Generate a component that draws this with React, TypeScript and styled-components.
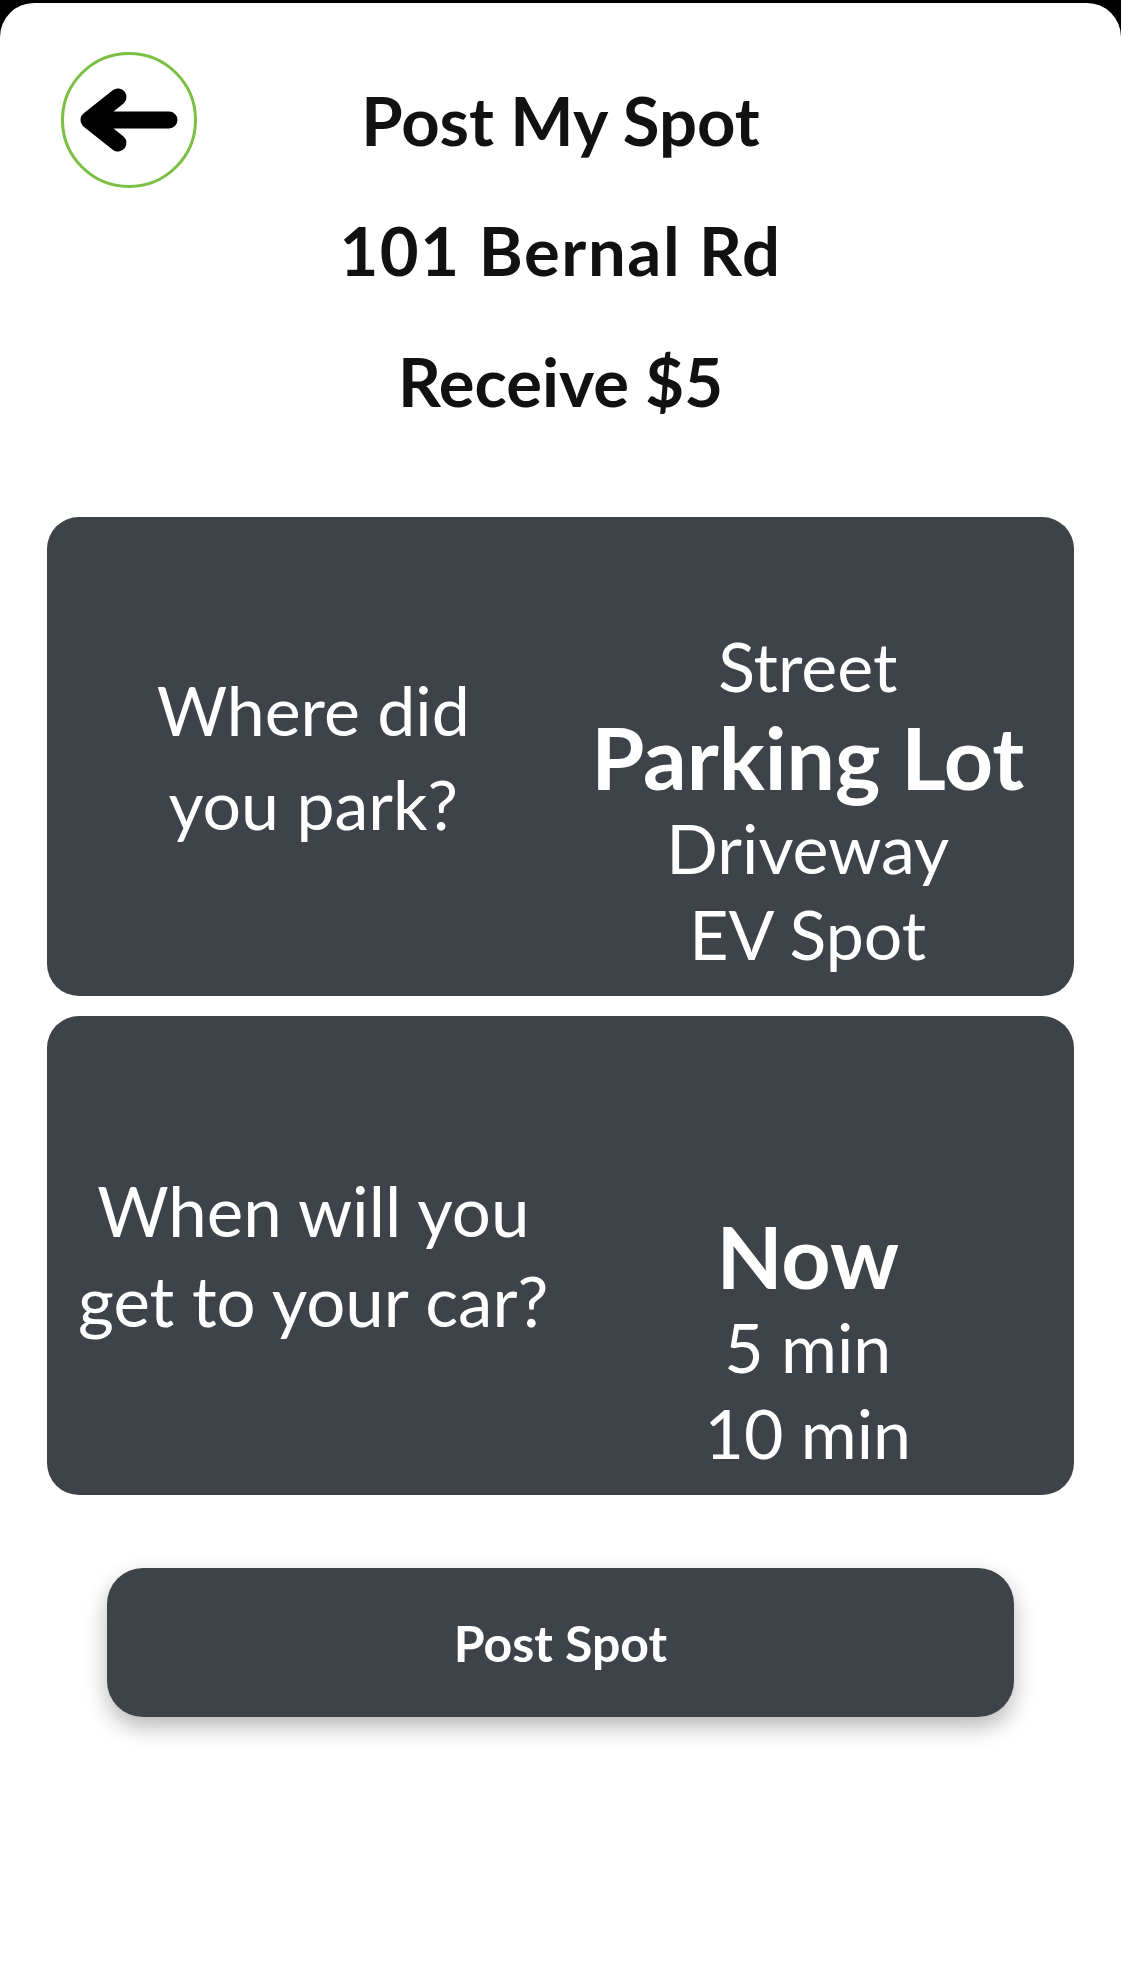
import React from "react";
import styled, { createGlobalStyle } from "styled-components";

const GlobalStyle = createGlobalStyle`
  html, body {
    margin: 0;
    padding: 0;
    background: #000;
  }
  body {
    font-family: Lato, "Liberation Sans", Arial, sans-serif;
    -webkit-font-smoothing: antialiased;
  }
  * { box-sizing: border-box; }
`;

const Sheet = styled.main`
  margin-top: 3px;
  min-height: 1981px;
  background: #fff;
  border-radius: 34px 34px 0 0;
  padding: 49px 47px 0;
  display: flex;
  flex-direction: column;
`;

const Header = styled.header`
  display: grid;
  grid-template-columns: 136px 1fr 136px;
  align-items: center;
  padding: 0 14px;
`;

const BackButton = styled.button`
  width: 136px;
  height: 136px;
  padding: 0;
  border: 3px solid #7bc043;
  border-radius: 50%;
  background: #fff;
  display: flex;
  align-items: center;
  justify-content: center;
  cursor: pointer;
`;

const Title = styled.h1`
  margin: 0;
  font-size: 67px;
  line-height: 80px;
  font-weight: 700;
  color: #111;
  text-align: center;
  white-space: nowrap;
`;

const Details = styled.div`
  display: flex;
  flex-direction: column;
  gap: 51px;
  margin-top: 22px;
`;

const InfoLine = styled.h2<{ $spacing?: number }>`
  margin: 0;
  font-size: 67px;
  line-height: 80px;
  font-weight: 700;
  color: #111;
  text-align: center;
  letter-spacing: ${(p) => p.$spacing ?? 0}px;
`;

const CardList = styled.section`
  display: flex;
  flex-direction: column;
  gap: 20px;
  margin-top: 96px;
`;

const Card = styled.div`
  height: 479px;
  background: #3e4249;
  border-radius: 32px;
  display: grid;
  grid-template-columns: 1fr 1fr;
  column-gap: 22px;
  padding: 0 30px;
  color: #fff;
`;

const Question = styled.p<{ $lh: number; $size: number }>`
  margin: 0;
  align-self: center;
  text-align: center;
  font-size: ${(p) => p.$size}px;
  line-height: ${(p) => p.$lh}px;
  font-weight: 400;
  white-space: nowrap;
`;

const Picker = styled.div`
  display: grid;
  grid-template-rows: 1fr auto 1fr;
  text-align: center;
  height: 100%;
`;

const OptionGroup = styled.div<{ $end?: boolean }>`
  display: flex;
  flex-direction: column;
  justify-content: ${(p) => (p.$end ? "flex-end" : "flex-start")};
`;

const Option = styled.div`
  font-size: 68px;
  line-height: 86px;
  font-weight: 400;
  white-space: nowrap;
`;

const SelectedOption = styled.div`
  font-size: 86px;
  line-height: 96px;
  font-weight: 700;
  white-space: nowrap;
`;

const PostButton = styled.button`
  margin: 73px 60px 0;
  height: 149px;
  border: none;
  border-radius: 36px;
  background: #3e4249;
  color: #fff;
  font-family: inherit;
  font-size: 50px;
  font-weight: 700;
  box-shadow: 0 10px 22px rgba(0, 0, 0, 0.28);
  cursor: pointer;
`;

const BackArrow = () => (
  <svg width="136" height="136" viewBox="0 0 136 136" aria-hidden="true" style={{ margin: -3 }}>
    <path
      d="M28 68 H108 M57 45 L28 68 L57 91"
      fill="none"
      stroke="#000"
      strokeWidth="17"
      strokeLinecap="round"
      strokeLinejoin="round"
    />
  </svg>
);

type PickerProps = { before: string[]; selected: string; after: string[] };

const WheelPicker = ({ before, selected, after }: PickerProps) => (
  <Picker>
    <OptionGroup $end>
      {before.map((o) => (
        <Option key={o}>{o}</Option>
      ))}
    </OptionGroup>
    <SelectedOption>{selected}</SelectedOption>
    <OptionGroup>
      {after.map((o) => (
        <Option key={o}>{o}</Option>
      ))}
    </OptionGroup>
  </Picker>
);

export default function App() {
  return (
    <>
      <GlobalStyle />
      <Sheet>
        <Header>
          <BackButton aria-label="Back">
            <BackArrow />
          </BackButton>
          <Title>Post My Spot</Title>
          <span />
        </Header>
        <Details>
          <InfoLine $spacing={1.6}>101 Bernal Rd</InfoLine>
          <InfoLine>Receive $5</InfoLine>
        </Details>
        <CardList>
          <Card>
            <Question $lh={94} $size={68}>
              Where did
              <br />
              you park?
            </Question>
            <WheelPicker before={["Street"]} selected="Parking Lot" after={["Driveway", "EV Spot"]} />
          </Card>
          <Card>
            <Question $lh={90} $size={69}>
              When will you
              <br />
              get to your car?
            </Question>
            <WheelPicker before={[]} selected="Now" after={["5 min", "10 min"]} />
          </Card>
        </CardList>
        <PostButton>Post Spot</PostButton>
      </Sheet>
    </>
  );
}
